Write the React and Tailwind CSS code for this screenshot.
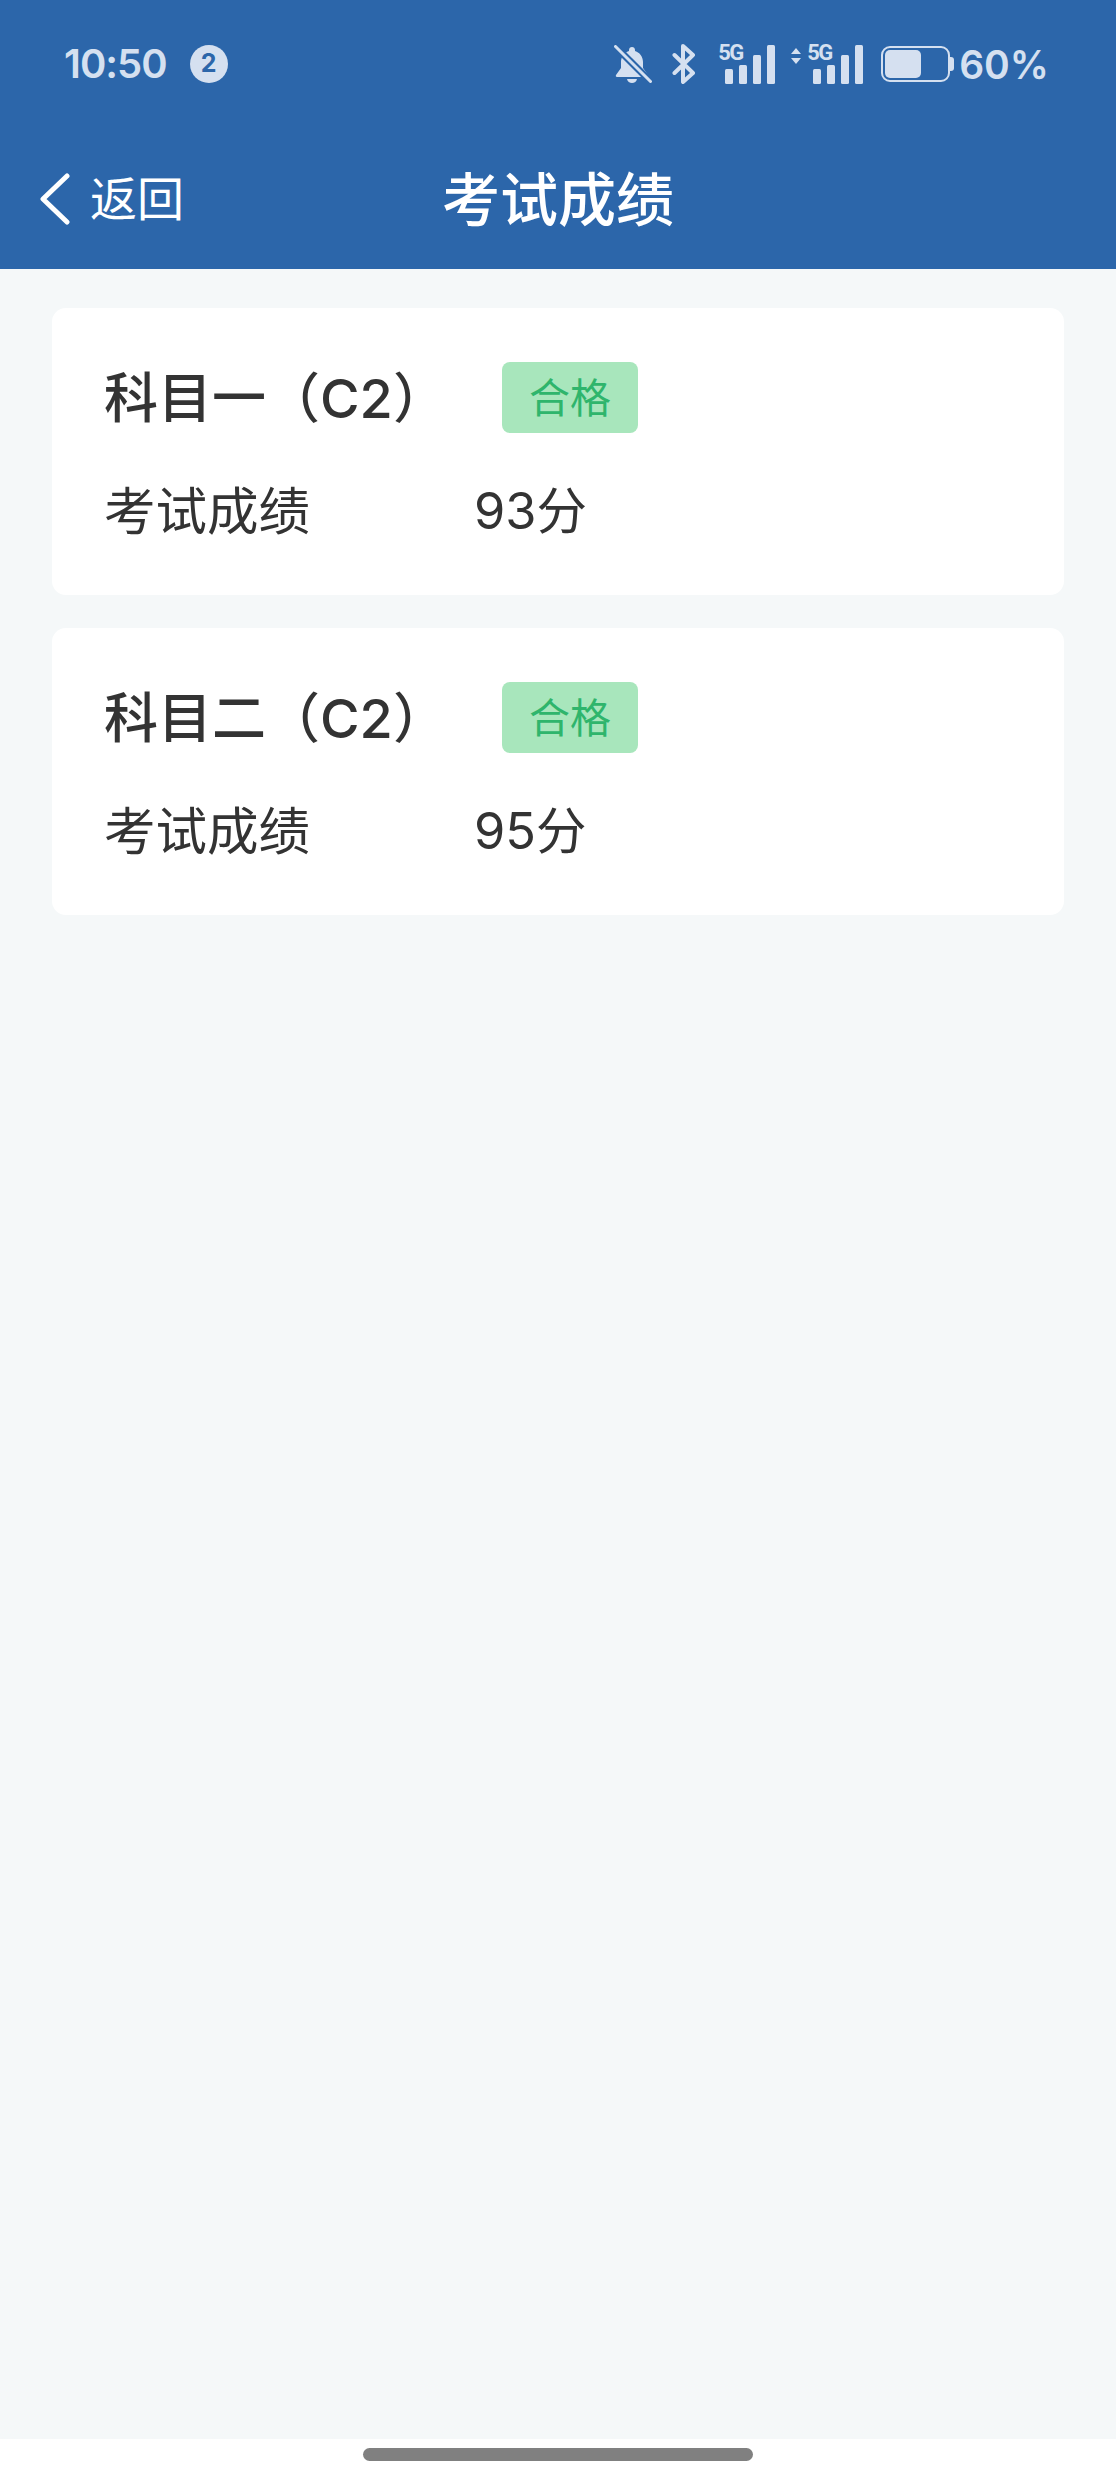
const SANS = 'font-["Inter","Noto_Sans_CJK_SC",sans-serif]'

const scores = [
  { name: '科目一（C2）', score: '93分' },
  { name: '科目二（C2）', score: '95分' },
]

function BellOff() {
  return (
    <svg width="38" height="38" viewBox="0 0 38 38" fill="none">
      <path d="M18 2c1.700 0 3 1.300 3 3v1c5 1.500 8 6 8 11v6l5 7c.5 1 0 2-1 2H3c-1 0-1.500-1-1-2l5-7v-6c0-5 3-9.500 8-11V5c0-1.700 1.300-3 3-3Z" fill="#d5e0f0" />
      <path d="M13 34h10c-.5 2.500-2.500 4-5 4s-4.500-1.500-5-4Z" fill="#d5e0f0" />
      <path d="M1 1l36 36" stroke="#2c66aa" strokeWidth="7" />
      <path d="M1.500 1.500l35 35" stroke="#d5e0f0" strokeWidth="3" strokeLinecap="round" />
    </svg>
  )
}

function Bluetooth() {
  return (
    <svg width="24" height="40" viewBox="0 0 24 40" fill="none" stroke="#d5e0f0" strokeWidth="4" strokeLinejoin="round" strokeLinecap="round">
      <path d="M2.500 11 21 29l-10 9V2l10 9L2.500 29" />
    </svg>
  )
}

function Bars() {
  return (
    <div className="flex items-end gap-[6px] h-[40px]">
      <div className="w-[8px] h-[15px] rounded-[1.5px] bg-[#d5e0f0]" />
      <div className="w-[8px] h-[19px] rounded-[1.5px] bg-[#d5e0f0]" />
      <div className="w-[8px] h-[29px] rounded-[1.5px] bg-[#d5e0f0]" />
      <div className="w-[8px] h-[39px] rounded-[1.5px] bg-[#d5e0f0]" />
    </div>
  )
}

function Signal({ arrows }) {
  return (
    <div className="relative flex items-end">
      {arrows && (
        <svg className="mr-[12px] mb-[20px]" width="10" height="16" viewBox="0 0 10 16" fill="#d5e0f0">
          <path d="M5 0l5 6H0zM5 16l5-6H0z" />
        </svg>
      )}
      <div className={arrows ? '' : 'ml-[7px]'}>
        <Bars />
      </div>
      <span className={`absolute top-[-3px] ${arrows ? 'left-[16px]' : 'left-0'} text-[22px] leading-[24px] font-bold tracking-[-1.5px] text-[#d5e0f0] font-["Roboto",sans-serif]`}>5G</span>
    </div>
  )
}

function Battery() {
  return (
    <div className="flex items-center">
      <div className="w-[69px] h-[36px] rounded-[9px] border-2 border-[#d5e0f0] p-[2px]">
        <div className="w-[36px] h-full rounded-[5px] bg-[#d5e0f0]" />
      </div>
      <div className="w-[4px] h-[14px] rounded-r-[3px] bg-[#d5e0f0]" />
    </div>
  )
}

function StatusBar() {
  return (
    <div className="h-[128px] pl-[64px] pr-[67px] flex items-center justify-between text-[#d5e0f0]">
      <div className="flex items-center gap-[23px]">
        <span className="text-[40px] leading-none font-semibold tracking-[-1px]">10:50</span>
        <span className="w-[38px] h-[38px] rounded-full bg-[#d5e0f0] text-[#2c66aa] text-[25px] font-bold flex items-center justify-center">2</span>
      </div>
      <div className="flex items-center">
        <BellOff />
        <div className="ml-[20px]"><Bluetooth /></div>
        <div className="ml-[22px]"><Signal /></div>
        <div className="ml-[16px]"><Signal arrows /></div>
        <div className="ml-[18px]"><Battery /></div>
        <span className="ml-[5px] text-[39px] leading-none font-semibold">60%</span>
      </div>
    </div>
  )
}

function NavBar() {
  return (
    <div className="h-[141px] px-[40px] grid grid-cols-[1fr_auto_1fr] items-center text-white">
      <div className="flex items-center">
        <svg width="30" height="52" viewBox="0 0 30 52" fill="none" stroke="#fff" strokeWidth="5" strokeLinecap="round" strokeLinejoin="round">
          <path d="M27 3 3 26l24 23" />
        </svg>
        <span className="ml-[20px] text-[47px] leading-none">返回</span>
      </div>
      <h1 className="text-[58px] leading-none font-medium pt-[2px]">考试成绩</h1>
      <div />
    </div>
  )
}

function ScoreCard({ name, score }) {
  return (
    <div className="h-[287px] rounded-[14px] bg-white pl-[52px] pt-[54px]">
      <div className="flex items-center h-[71px]">
        <div className="w-[398px] pt-[2px] text-[54px] leading-none font-medium text-[#333333]">{name}</div>
        <div className="w-[136px] h-[71px] rounded-[8px] bg-[#a8e6bc] text-[#2fb56c] text-[41px] pt-[2px] flex items-center justify-center">合格</div>
      </div>
      <div className="mt-[43px] flex items-center text-[#333333] leading-[70px]">
        <div className="w-[370px] text-[51.500px]">考试成绩</div>
        <div className="text-[50.500px]">{score}</div>
      </div>
    </div>
  )
}

export default function App() {
  return (
    <div className={`w-[1116px] h-[2484px] flex flex-col bg-white ${SANS}`}>
      <header className="bg-[#2c66aa]">
        <StatusBar />
        <NavBar />
      </header>
      <main className="flex-1 bg-[#f5f8f9] px-[52px] pt-[39px] flex flex-col gap-[33px]">
        {scores.map(s => (
          <ScoreCard key={s.name} name={s.name} score={s.score} />
        ))}
      </main>
      <div className="h-[45px] pt-[9px] flex justify-center">
        <div className="w-[390px] h-[13px] rounded-full bg-[#808080]" />
      </div>
    </div>
  )
}
